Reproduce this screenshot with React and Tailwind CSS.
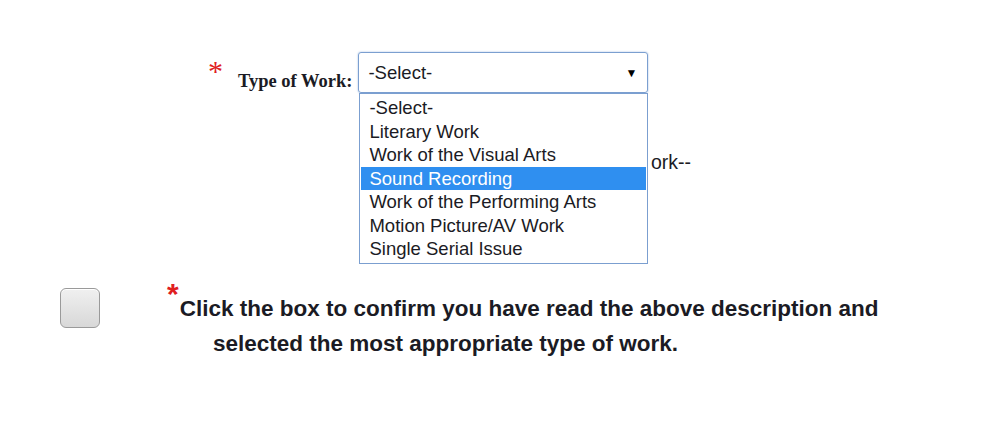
import React from 'react';

const options = [
  'Literary Work',
  'Work of the Visual Arts',
  'Sound Recording',
  'Work of the Performing Arts',
  'Motion Picture/AV Work',
  'Single Serial Issue',
];

const App = () => {
  return (
    <div className="w-[1000px] h-[431px] bg-white overflow-hidden font-['Liberation_Sans',Arial,sans-serif] text-[#1b1b24]">
      {/* Type of work row */}
      <div className="flex items-start pt-[52px] pl-[208px]">
        <span className="font-['Liberation_Serif',serif] text-[30px] leading-none text-[#e0201e] mt-[4px] w-[30px]">*</span>
        <label className="font-['Liberation_Serif',serif] font-bold text-[18.5px] mt-[16px] mr-[6px]">Type of Work:</label>
        <div className="relative">
          <div className="w-[290px] h-[41px] border border-[#7b9fd0] rounded-[3px] shadow-[0_0_2px_#9db8e0] flex items-center justify-between pl-[9px] pr-[10px] text-[18.5px]">
            <span>-Select-</span>
            <span className="text-[12px] text-black">▼</span>
          </div>
          {/* open dropdown */}
          <ul className="absolute left-[1px] top-[41px] w-[289px] bg-white border border-[#7b9fd0] py-[2px] px-[1px] text-[18.5px] leading-[23.5px] z-10">
            <li className="pl-[8px]">-Select-</li>
            {options.map((o) => (
              <li
                key={o}
                className={o === 'Sound Recording' ? 'pl-[8px] bg-[#2f8ff0] text-white' : 'pl-[8px]'}
              >
                {o}
              </li>
            ))}
          </ul>
        </div>
      </div>

      {/* helper text, mostly hidden behind the open list */}
      <div className="ml-[651px] flex mt-[54px] text-[19.5px] leading-[24px]">
        <span className="whitespace-nowrap">ork--</span>
      </div>

      {/* Confirm row */}
      <div className="flex items-start mt-[117px] pl-[60px]">
        <div className="w-[40px] h-[40px] rounded-[6px] border border-[#9a9a9a] bg-gradient-to-b from-[#f0f0f0] to-[#d8d8d8] shadow-[inset_0_1px_0_#fff] mt-[-3px]"></div>
        <div className="ml-[67px] font-bold text-[22.5px] leading-[35px]">
          <p>
            <span className="text-[#e0201e] text-[30px] leading-none relative top-[-12px] mr-[1px]">*</span>
            Click the box to confirm you have read the above description and
          </p>
          <p className="pl-[46px]">selected the most appropriate type of work.</p>
        </div>
      </div>
    </div>
  );
};

export default App;
